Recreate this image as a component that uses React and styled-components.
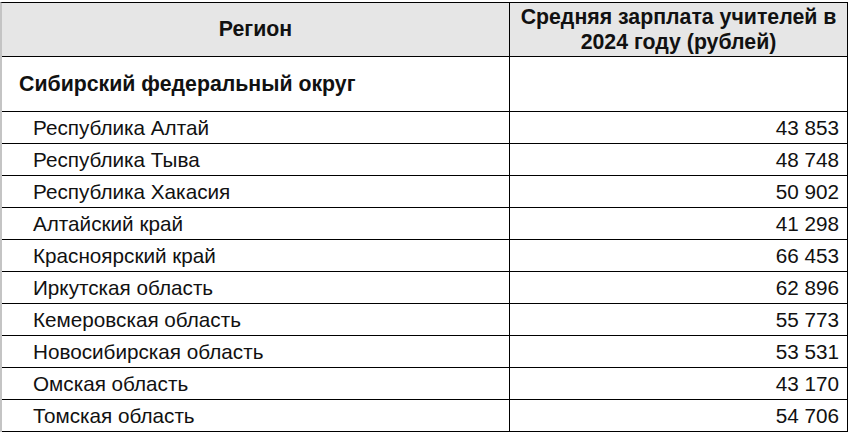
import styled, { createGlobalStyle } from "styled-components";

const GlobalStyle = createGlobalStyle`
  body {
    margin: 0;
    background: #ffffff;
    font-family: "Liberation Sans", Arial, sans-serif;
    color: #111;
  }
`;

const Table = styled.div`
  margin-top: 2px;
  width: 848px;
  box-sizing: border-box;
  border-top: 1px solid #000;
  border-left: 2px solid #c4c4c4;
  border-right: 1px solid #000;
`;

const Row = styled.div`
  display: grid;
  grid-template-columns: 508px 1fr;
  height: ${(p) => p.$h}px;
  box-sizing: border-box;
  border-bottom: 1px solid #000;
  background: ${(p) => (p.$head ? "#e6e6e6" : "#fff")};
`;

const Cell = styled.div`
  display: flex;
  align-items: center;
  box-sizing: border-box;
  font-size: ${(p) => (p.$bold ? 21.3 : 20.7)}px;
  line-height: 25px;
  white-space: nowrap;
  font-weight: ${(p) => (p.$bold ? "bold" : "normal")};
  justify-content: ${(p) =>
    p.$align === "center" ? "center" : p.$align === "right" ? "flex-end" : "flex-start"};
  text-align: ${(p) => p.$align || "left"};
  padding: 0 ${(p) => p.$pr || 0}px 0 ${(p) => p.$pl || 0}px;
  border-right: ${(p) => (p.$first ? "1px solid #000" : "none")};
`;

const rows = [
  ["Республика Алтай", "43 853"],
  ["Республика Тыва", "48 748"],
  ["Республика Хакасия", "50 902"],
  ["Алтайский край", "41 298"],
  ["Красноярский край", "66 453"],
  ["Иркутская область", "62 896"],
  ["Кемеровская область", "55 773"],
  ["Новосибирская область", "53 531"],
  ["Омская область", "43 170"],
  ["Томская область", "54 706"],
];

export default function App() {
  return (
    <>
      <GlobalStyle />
      <Table>
        <Row $h={54} $head>
          <Cell $first $bold $align="center">
            Регион
          </Cell>
          <Cell $bold $align="center">
            Средняя зарплата учителей в
            <br />
            2024 году (рублей)
          </Cell>
        </Row>
        <Row $h={55}>
          <Cell $first $bold $pl={17}>
            Сибирский федеральный округ
          </Cell>
          <Cell />
        </Row>
        {rows.map(([name, value]) => (
          <Row key={name} $h={32}>
            <Cell $first $pl={31}>
              {name}
            </Cell>
            <Cell $align="right" $pr={8}>
              {value}
            </Cell>
          </Row>
        ))}
      </Table>
    </>
  );
}
